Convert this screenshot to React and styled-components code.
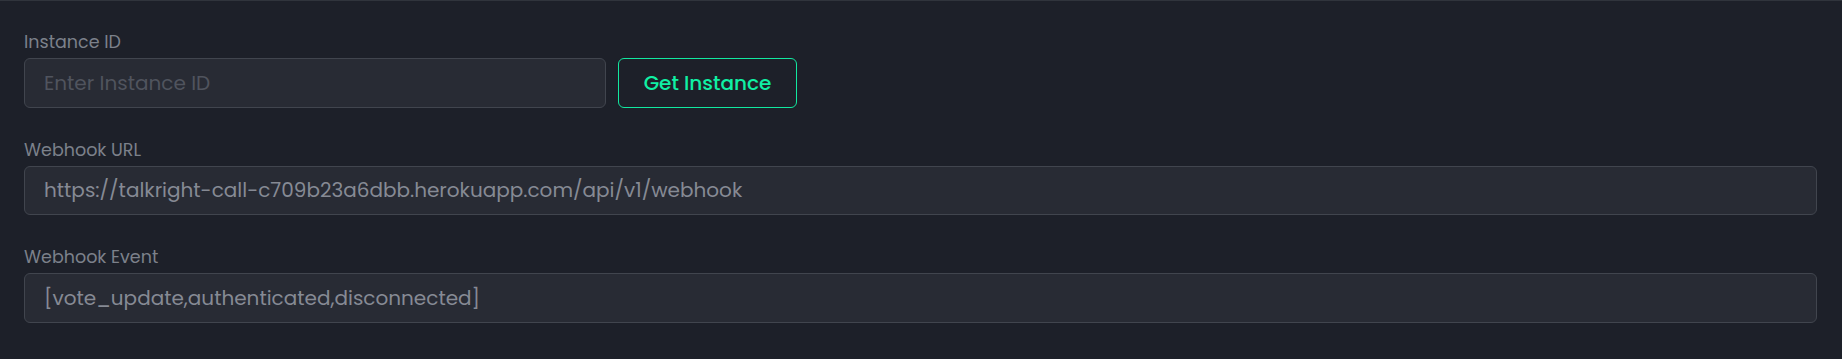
import React from "react";
import styled, { createGlobalStyle } from "styled-components";

const GlobalStyle = createGlobalStyle`
  html, body {
    margin: 0;
    padding: 0;
    background: #1d2029;
  }
  body {
    font-family: "Poppins", "Inter", "Noto Sans", sans-serif;
  }
  * {
    box-sizing: border-box;
  }
`;

const Page = styled.div`
  min-height: 359px;
  background: #1d2029;
  border-top: 1px solid #30343c;
  padding: 29px 25px 0 24px;
`;

const Form = styled.form`
  display: flex;
  flex-direction: column;
  gap: 30px;
`;

const Field = styled.div`
  display: flex;
  flex-direction: column;
  gap: 4px;
`;

const Label = styled.label`
  font-size: 17.5px;
  line-height: 24px;
  color: #7c818b;
`;

const Row = styled.div`
  display: flex;
  gap: 12px;
  align-items: stretch;
`;

const TextInput = styled.input`
  width: ${(p) => (p.$narrow ? "582px" : "100%")};
  height: 49.5px;
  padding: 0 19px;
  background: #282b34;
  border: 1px solid #41454e;
  border-radius: 6px;
  color: #868a94;
  font-family: inherit;
  font-size: 20px;
  outline: none;

  &::placeholder {
    color: #50545e;
  }
`;

const Button = styled.button`
  width: 179px;
  height: 49.5px;
  background: transparent;
  border: 1px solid #12e8a0;
  border-radius: 6px;
  color: #10f0a4;
  font-family: inherit;
  font-size: 20px;
  font-weight: 500;
  cursor: pointer;
`;

const App = () => {
  return (
    <>
      <GlobalStyle />
      <Page>
        <Form onSubmit={(e) => e.preventDefault()}>
          <Field>
            <Label htmlFor="instance">Instance ID</Label>
            <Row>
              <TextInput id="instance" $narrow placeholder="Enter Instance ID" />
              <Button type="button">Get Instance</Button>
            </Row>
          </Field>
          <Field>
            <Label htmlFor="webhook-url">Webhook URL</Label>
            <TextInput
              id="webhook-url"
              readOnly
              value="https://talkright-call-c709b23a6dbb.herokuapp.com/api/v1/webhook"
            />
          </Field>
          <Field>
            <Label htmlFor="webhook-event">Webhook Event</Label>
            <TextInput
              id="webhook-event"
              readOnly
              value="[vote_update,authenticated,disconnected]"
            />
          </Field>
        </Form>
      </Page>
    </>
  );
};

export default App;
